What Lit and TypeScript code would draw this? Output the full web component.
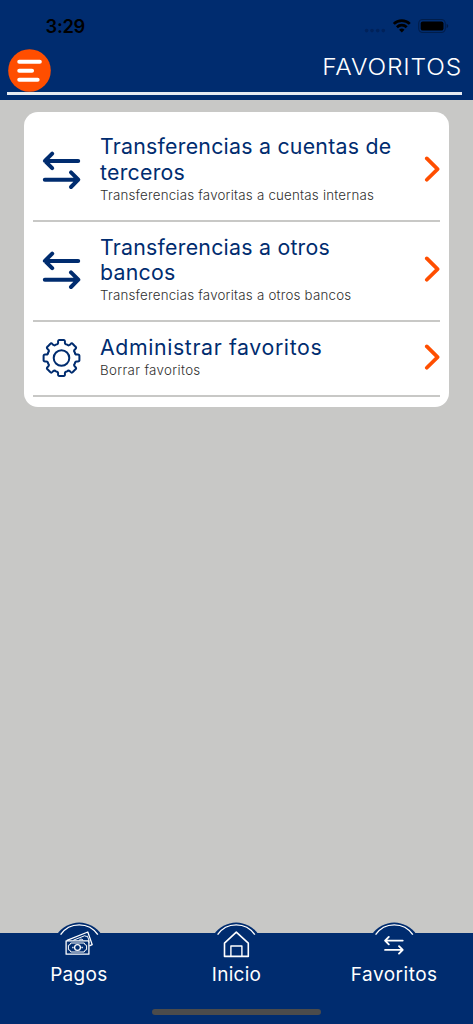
import { LitElement, html, css, svg } from "lit";
import { customElement } from "lit/decorators.js";
import { classMap } from "lit/directives/class-map.js";

const arrows = html`<svg class="icon" viewBox="0 0 40 40" width="40" height="40" fill="none"
  stroke="currentColor" stroke-width="4" stroke-linecap="round" stroke-linejoin="round">
  <path d="M36.2 10.9H3.2M10.2 3.6 2.9 10.9l7.3 7.3M2.8 29.7h33.4M29 22.4l7.3 7.3-7.3 7.3" />
</svg>`;

/* Eight-toothed cog outline, one tooth every 45 degrees. */
const cogPath = (() => {
  const at = (r: number, deg: number) => {
    const a = ((deg - 90) * Math.PI) / 180;
    return `${(19.5 + r * Math.cos(a)).toFixed(2)} ${(20 + r * Math.sin(a)).toFixed(2)}`;
  };
  let d = "";
  for (let k = 0; k < 8; k++) {
    const a = k * 45;
    d += `${k ? "L" : "M"}${at(15.6, a - 12.5)}`;
    d += `L${at(16.6, a - 12)}Q${at(18.5, a - 11)} ${at(18, a - 6)}`;
    d += `L${at(18, a + 6)}Q${at(18.5, a + 11)} ${at(16.6, a + 12)}`;
    d += `L${at(15.6, a + 12.5)}Q${at(13.8, a + 15)} ${at(14.5, a + 22.5)}`;
    d += `Q${at(13.8, a + 30)} ${at(15.6, a + 32.5)}`;
  }
  return d + "Z";
})();

const cog = html`<svg class="icon" viewBox="0 0 40 40" width="40" height="40" fill="none"
  stroke="currentColor" stroke-width="2" stroke-linejoin="round">
  <path d=${cogPath} /><circle cx="19.5" cy="20" r="7.8" />
</svg>`;

interface Row {
  icon: unknown;
  title: string[];
  sub: string;
  wide?: boolean;
}

const rows: Row[] = [
  { icon: arrows, title: ["Transferencias a cuentas de", "terceros"], sub: "Transferencias favoritas a cuentas internas" },
  { icon: arrows, title: ["Transferencias a otros", "bancos"], sub: "Transferencias favoritas a otros bancos" },
  { icon: cog, title: ["Administrar favoritos"], sub: "Borrar favoritos", wide: true },
];

const bills = svg`
  <g fill="none" stroke="#fff" stroke-width="1.3" stroke-linejoin="round">
    <rect x="16.1" y="18.8" width="22.8" height="13.4" />
    <path d="M20.8 21h13.4a2.6 2.6 0 0 0 2.4 2.3v4.4a2.6 2.6 0 0 0-2.4 2.3H20.8a2.6 2.6 0 0 0-2.4-2.3v-4.4a2.6 2.6 0 0 0 2.4-2.3z" stroke-width="1" />
    <circle cx="27.5" cy="25.5" r="2.9" />
    <path d="M22.2 25.5h1.4M31.4 25.5h1.4" stroke-width="1.6" />
    <path d="M17 18.4 37.8 10 42.2 22.6 39.4 23.8" />
    <path d="M23.4 18.2 34.8 13.7q1.3 1.2 2.6.5l1.6 4.1q-.9 1 .1 2.4M29.2 18.1q1.6-2.3 3.9-.1" stroke-width="1" />
  </g>`;

const house = svg`
  <g fill="none" stroke="#fff" stroke-width="1.6" stroke-linejoin="round">
    <path d="M17.5 34.4V21.2L29.3 10.2 41.3 21.2V34.4Z" />
    <path d="M23.9 34.4V24h11V34.4" stroke-width="1.4" />
  </g>`;

const swap = svg`
  <g fill="none" stroke="#fff" stroke-width="1.9" stroke-linecap="round" stroke-linejoin="round">
    <path d="M37.7 18.6H20.4M23.8 14.9 20.1 18.6l3.7 3.7M20.1 27.9H37.4M34 24.2l3.7 3.7-3.7 3.7" />
  </g>`;

const tabs = [
  { glyph: bills, label: "Pagos", cls: "pagos" },
  { glyph: house, label: "Inicio", cls: "inicio" },
  { glyph: swap, label: "Favoritos", cls: "favoritos" },
];

@customElement("app-root")
export class AppRoot extends LitElement {
  static styles = css`
    :host {
      display: flex;
      flex-direction: column;
      height: 100vh;
      background: #c8c8c6;
      font-family: Inter, "Liberation Sans", sans-serif;
      font-weight: 300;
      overflow: hidden;
    }
    svg { display: block; flex: none; }
    header {
      box-sizing: border-box;
      height: 100.3px;
      flex: none;
      background: #002c6f;
    }
    .status {
      display: flex;
      justify-content: space-between;
      height: 49px;
      padding: 0 24px 0 45.5px;
    }
    .time {
      font-size: 18.3px;
      line-height: 22px;
      font-weight: 600;
      letter-spacing: -0.25px;
      padding-top: 15px;
      color: #000;
    }
    .bar {
      box-sizing: border-box;
      display: flex;
      justify-content: space-between;
      height: 46px;
      margin: 0 11.5px 0 7px;
      border-bottom: 3px solid #e6eaf1;
    }
    .menu { margin-left: 1px; }
    .heading {
      margin: 4.2px -1px 0 0;
      font-size: 22.3px;
      line-height: 27px;
      letter-spacing: 0.75px;
      color: #fff;
      transform: scaleX(1.1);
      transform-origin: right;
    }
    main { flex: 1; padding: 11.7px 24px 0; }
    .card {
      padding: 9.8px 9px 9.5px;
      border-radius: 14px;
      background: #fff;
    }
    .row {
      display: flex;
      align-items: center;
      padding: 12.5px 0 16.5px 9px;
      border-bottom: 2px solid #c8c8c6;
      color: #002c6f;
      margin-bottom: 0.3px;
    }
    .icon { margin: 2px 17.6px 0 0.4px; }
    .text { flex: 1; white-space: nowrap; }
    .title {
      font-size: 21.3px;
      line-height: 25.5px;
      letter-spacing: 0.25px;
      font-weight: 400;
    }
    .wide .title { letter-spacing: 0.62px; }
    .sub {
      margin: 1.4px 0 0.6px;
      font-size: 13.3px;
      line-height: 16px;
      letter-spacing: 0.22px;
      color: #30302f;
    }
    .wide .sub { letter-spacing: 0.34px; }
    .chevron { color: #ff4e00; }
    nav {
      display: grid;
      grid-template-columns: repeat(3, 1fr);
      height: 102px;
      flex: none;
      position: relative;
      background: linear-gradient(transparent 11.5px, #002c6f 11.5px);
    }
    .tab {
      display: flex;
      flex-direction: column;
      align-items: center;
      color: #fff;
      font-size: 19px;
      line-height: 23px;
    }
    .tab span { margin-top: 1px; font-weight: 400; }
    .pagos span { letter-spacing: 0.3px; }
    .inicio span { letter-spacing: 0.25px; }
    .favoritos span { letter-spacing: 0.5px; }
    .home {
      position: absolute;
      left: 152px;
      bottom: 9.5px;
      width: 169px;
      height: 5.5px;
      border-radius: 3px;
      background: #4b4b4b;
    }
  `;

  render() {
    return html`
      <header>
        <div class="status">
          <div class="time">3:29</div>
          <svg width="86" height="49" viewBox="363 0 86 49">
            <g fill="#00225a">
              <circle cx="366.6" cy="30.6" r="1.8" /><circle cx="372" cy="30.6" r="1.8" />
              <circle cx="377.7" cy="30.6" r="1.8" /><circle cx="383.3" cy="30.6" r="1.8" />
            </g>
            <g fill="none" stroke="#000" stroke-width="2.7">
              <path d="M393.8 23.9a11.3 11.3 0 0 1 16 0" />
              <path d="M396.9 27.2a7 7 0 0 1 9.8 0" />
            </g>
            <path d="M401.8 32.4l-2.7-2.7a3.9 3.9 0 0 1 5.4 0z" fill="#000" />
            <rect x="418.7" y="19.5" width="26.6" height="13" rx="4" fill="none" stroke="#001d4a" stroke-width="1.1" />
            <rect x="420.7" y="21.4" width="22.8" height="9.2" rx="2.2" fill="#000" />
            <path d="M446.6 23.8q1.7.8 1.7 2.2t-1.7 2.2z" fill="#001a44" />
          </svg>
        </div>
        <div class="bar">
          <svg class="menu" width="43" height="43" viewBox="0 0 43 43">
            <circle cx="21.5" cy="21.5" r="21.3" fill="#ff4e00" />
            <g stroke="#fff" stroke-width="4.1" stroke-linecap="round">
              <path d="M11.3 12.8H31.8M11.3 21.8H24M11.3 30.7H29.6" />
            </g>
          </svg>
          <div class="heading">FAVORITOS</div>
        </div>
      </header>
      <main>
        <div class="card">
          ${rows.map(
            (r) => html`<div class=${classMap({ row: true, wide: !!r.wide })}>
              ${r.icon}
              <div class="text">
                ${r.title.map((line) => html`<div class="title">${line}</div>`)}
                <div class="sub">${r.sub}</div>
              </div>
              <svg class="chevron" width="16" height="26" viewBox="0 0 16 26" fill="none"
                stroke="currentColor" stroke-width="3.7" stroke-linecap="round" stroke-linejoin="round">
                <path d="M2.8 2.4 13.6 13.1 2.8 23.8" />
              </svg>
            </div>`
          )}
        </div>
      </main>
      <nav>
        ${tabs.map(
          (t) => html`<div class="tab ${t.cls}">
            <svg width="58" height="40" viewBox="0 0 58 40">
              <path d="M6.9 12.4A27 27 0 0 1 51.5 12.4Z" fill="#002c6f" />
              <path d="M10.6 12.6A22.6 22.6 0 0 1 47.8 12.6" fill="none" stroke="#fff" stroke-width="1.4" />
              ${t.glyph}
            </svg>
            <span>${t.label}</span>
          </div>`
        )}
        <div class="home"></div>
      </nav>
    `;
  }
}
